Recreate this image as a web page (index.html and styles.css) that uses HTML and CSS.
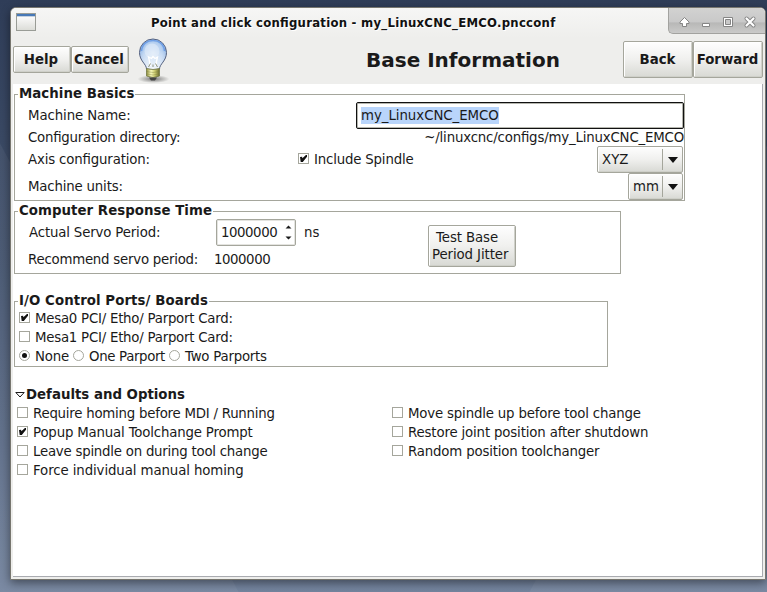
FILE: index.html
```html
<!DOCTYPE html>
<html lang="en">
<head>
<meta charset="utf-8">
<title>Point and click configuration</title>
<link rel="stylesheet" href="styles.css">
</head>
<body>
<div class="window">
  <header class="titlebar">
    <span class="app-icon"></span>
    <span class="caption">Point and click configuration - my_LinuxCNC_EMCO.pncconf</span>
    <span class="controls">
      <svg width="97" height="26" viewBox="0 0 97 26" stroke-linejoin="round">
        <path d="M15.500 9.500 20 14V15.500H17.500V18.500H13.500V15.500H11V14Z" fill="#fff" stroke="#858585"/>
        <rect x="33.500" y="15.500" width="7" height="3" fill="#fff" stroke="#858585"/>
        <rect x="54.500" y="9.500" width="9" height="9" fill="#fff" stroke="#858585"/>
        <rect x="56.500" y="11.500" width="5" height="5" fill="#c8c8c8" stroke="#858585"/>
        <path d="M77.500 10.500 84.500 17.500M84.500 10.500 77.500 17.500" stroke="#858585" stroke-width="4" stroke-linecap="round"/>
        <path d="M77.500 10.500 84.500 17.500M84.500 10.500 77.500 17.500" stroke="#fff" stroke-width="2.2" stroke-linecap="round"/>
      </svg>
    </span>
  </header>
  <div class="toolbar">
    <button class="btn small">Help</button>
    <button class="btn small">Cancel</button>
    <svg class="bulb" width="34" height="46" viewBox="0 0 34 46">
      <defs>
        <radialGradient id="glass" cx=".5" cy=".45" r=".62"><stop offset="0" stop-color="#dce9f8"/><stop offset=".55" stop-color="#b6d0f0"/><stop offset="1" stop-color="#6d9cdc"/></radialGradient>
        <linearGradient id="glow" x1="0" y1="0" x2="0" y2="1"><stop offset=".35" stop-color="#fff" stop-opacity="0"/><stop offset="1" stop-color="#fff" stop-opacity=".95"/></linearGradient>
        <linearGradient id="brass"><stop offset="0" stop-color="#8d8d3c"/><stop offset=".35" stop-color="#fafabc"/><stop offset=".65" stop-color="#c9c96c"/><stop offset="1" stop-color="#66662d"/></linearGradient>
        <radialGradient id="shade"><stop offset="0" stop-color="#000" stop-opacity=".5"/><stop offset="1" stop-color="#000" stop-opacity="0"/></radialGradient>
      </defs>
      <ellipse cx="17.500" cy="41" rx="16" ry="4" fill="url(#shade)"/>
      <path d="M10.500 31C10.500 26 3.500 23 3.500 14.500A13.500 13.500 0 0 1 30.500 14.500C30.500 23 23.500 26 23.500 31Q17 33 10.500 31Z" fill="url(#glass)"/>
      <path d="M10.500 31C10.500 26 3.500 23 3.500 14.500A13.500 13.500 0 0 1 30.500 14.500C30.500 23 23.500 26 23.500 31Q17 33 10.500 31Z" fill="url(#glow)" stroke="#55617e"/>
      <path d="M5.500 13C6 6 11 2.500 17 2.500S28 6 28.500 13" fill="none" stroke="#6f9fe5" stroke-width="1.500"/>
      <circle cx="16" cy="13" r="7.500" fill="#e5effa" opacity=".55"/>
      <path d="M14.500 28 12.500 19 15.500 20.500 17 18.500 19 20.500 21.500 19 19.500 28" fill="none" stroke="#fff" stroke-width="1.300"/>
      <path d="M12.500 29 14.500 25.500M21.500 29 19.500 25.500M17 29V26.500" stroke="#8e937e" fill="none"/>
      <path d="M10.500 30.500Q17 32.500 23.500 30.500V38Q17 41 10.500 38Z" fill="url(#brass)" stroke="#747a45" stroke-width=".8"/>
      <path d="M10.500 33.500Q17 35.500 23.500 33.500M10.500 36Q17 38 23.500 36" stroke="#77783c" fill="none" stroke-width=".6" opacity=".6"/>
      <path d="M13 39.500H21L19 42.500H15Z" fill="#444"/>
    </svg>
    <h1>Base Information</h1>
    <button class="btn big">Back</button>
    <button class="btn big">Forward</button>
  </div>
  <main>
    <section class="frame basics">
      <h2>Machine Basics</h2>
      <div class="row"><label class="snug-1">Machine Name:</label><div class="entry"><span>my_LinuxCNC_EMCO</span></div></div>
      <div class="row dir"><label class="snug-4">Configuration directory:</label><span class="snug-3">~/linuxcnc/configs/my_LinuxCNC_EMCO</span></div>
      <div class="row"><label class="axis snug-2">Axis configuration:</label>
        <span class="check on snug-3"><i></i>Include Spindle</span>
        <div class="combo xyz"><span>XYZ</span><b></b></div></div>
      <div class="row"><label class="snug-3">Machine units:</label><div class="combo mm"><span>mm</span><b></b></div></div>
    </section>
    <section class="frame response">
      <h2>Computer Response Time</h2>
      <div class="periods">
        <label class="actual snug-2">Actual Servo Period:</label>
        <div class="spin-cell"><div class="spin"><span class="digits">1000000</span>
          <svg width="7" height="15" viewBox="0 0 7 15"><path d="M.5 3.500 3.500 .5 6.500 3.500ZM.5 11.500 3.500 14.500 6.500 11.500Z" fill="#1a1a1a"/></svg></div><span>ns</span></div>
        <label class="snug-4">Recommend servo period:</label>
        <span class="digits">1000000</span>
      </div>
      <button class="btn jitter"><span>Test Base</span><span class="snug-1">Period Jitter</span></button>
    </section>
    <section class="frame ports">
      <h2>I/O Control Ports/ Boards</h2>
      <div class="line"><span class="check on snug-4"><i></i>Mesa0 PCI/ Etho/ Parport Card:</span></div>
      <div class="line"><span class="check snug-4"><i></i>Mesa1 PCI/ Etho/ Parport Card:</span></div>
      <div class="line"><span class="radio on snug-3"><i></i>None</span><span class="radio snug-5"><i></i>One Parport</span><span class="radio snug-4"><i></i>Two Parports</span></div>
    </section>
    <section class="options">
      <h3><svg width="10" height="8" viewBox="0 0 10 8"><path d="M.8 1.500H9.200L5 6Z" fill="#fff" stroke="#1a1a1a"/></svg>Defaults and Options</h3>
      <div class="cols">
        <div>
          <div class="line"><span class="check snug-4"><i></i>Require homing before MDI / Running</span></div>
          <div class="line"><span class="check on snug-3"><i></i>Popup Manual Toolchange Prompt</span></div>
          <div class="line"><span class="check snug-4"><i></i>Leave spindle on during tool change</span></div>
          <div class="line"><span class="check snug-1"><i></i>Force individual manual homing</span></div>
        </div>
        <div>
          <div class="line"><span class="check snug-3"><i></i>Move spindle up before tool change</span></div>
          <div class="line"><span class="check snug-2"><i></i>Restore joint position after shutdown</span></div>
          <div class="line"><span class="check snug-3"><i></i>Random position toolchanger</span></div>
        </div>
      </div>
    </section>
  </main>
</div>
</body>
</html>
```
FILE: styles.css
```css
* { box-sizing: border-box; }
body {
  margin: 0; width: 767px; height: 592px; overflow: hidden;
  padding: 7px 0 0 10px;
  background:
    linear-gradient(62deg, rgba(255,255,255,.05) 0 22%, transparent 22.1%),
    linear-gradient(118deg, transparent 0 78%, rgba(255,255,255,.05) 78.1%),
    linear-gradient(#2f3d58, #44546f 45%, #5c6c87 75%, #74849e);
  font: 13.33px/17px "DejaVu Sans", sans-serif; color: #1a1a1a;
  font-feature-settings: "liga" 1;
}
h1, h2, h3 { margin: 0; }
.snug-1 { letter-spacing: -.1px; }
.snug-2 { letter-spacing: -.16px; }
.snug-3 { letter-spacing: -.18px; }
.snug-4 { letter-spacing: -.235px; }
.snug-5 { letter-spacing: -.35px; }
.digits { letter-spacing: -.45px; }
.window {
  width: 756px; height: 573px; display: flex; flex-direction: column;
  border: 1px solid #77766f; border-radius: 6px 6px 1px 1px;
  background: #eeeeec; overflow: hidden;
  box-shadow: 0 3px 10px rgba(0,0,0,.45);
}
.titlebar { height: 30px; flex: none; display: flex; background: linear-gradient(#f6f6f5, #eeeeec); }
.app-icon {
  width: 20px; height: 18px; margin: 5px 0 0 5px; border: 1px solid #999c96;
  background: linear-gradient(#4779b7 0 2px, #c5d1df 2px 3px, #fafafa 3px, #dcddd8);
}
.caption {
  margin-left: 115px; width: 405px; white-space: nowrap; line-height: 30px;
  font-size: 11.7px; letter-spacing: .255px; font-weight: bold; color: #111; text-shadow: 1px 1px #fff;
}
.controls {
  margin-left: auto; width: 97px; height: 26px; border-radius: 0 0 0 5px;
  background: linear-gradient(#d2d2d1, #c9c9c9 55%, #b8b8b7 60%, #cacac9);
  border: solid #a2a29f; border-width: 0 0 1px 1px;
}
.controls svg { display: block; }
.toolbar { height: 46px; flex: none; display: flex; align-items: center; padding: 0 2px; margin-top: -2px; }
.btn {
  font: inherit; color: inherit; padding: 0; margin: 0; border: 1px solid #a5a69c; border-radius: 2px;
  background: linear-gradient(#fefefe, #f0f0ee 50%, #d8d9d4);
  box-shadow: inset 1px 1px #fff, inset -1px -1px #cfd0c9;
}
.small, .big { font-size: 13.33px; font-weight: bold; }
.small { width: 58px; height: 27px; margin-top: 1px; padding: 0 2px 1px 0; }
.bulb { margin: 3px 0 0 7px; }
.toolbar h1 { margin-left: 196px; width: 257px; font-size: 20px; line-height: 24px; white-space: nowrap; margin-top: 1px; }
.big { width: 70px; height: 37px; padding-right: 1px; }
main {
  flex: 1; margin: 2px; background: #fff;
  border: solid #a9abb0; border-width: 0 1px 1px 0; padding: 10px 0 0 1px;
}
.frame { position: relative; border: 1px solid #a5a69c; }
.frame h2 {
  position: absolute; left: 3px; top: -10px; padding: 0 1px; background: #fff;
  font-size: 13.33px; line-height: 17px; white-space: nowrap; letter-spacing: .04px;
}
.basics { width: 671px; height: 107px; padding: 7px 0 0 13px; }
.row { height: 27px; display: flex; align-items: center; justify-content: space-between; white-space: nowrap; }
.row.dir { height: 17px; }
.entry {
  width: 328px; height: 27px; border: 1px solid #111; border-radius: 2px;
  box-shadow: inset 0 0 0 1px #b5b6ae; padding: 4px 4px;
}
.entry span { display: inline-block; height: 17px; background: #b9d5fb; letter-spacing: -.04px; }
.axis { width: 270px; }
.check, .radio { display: flex; align-items: center; white-space: nowrap; }
.check i { width: 11px; height: 11px; border: 1px solid #a5a69c; background: #fff; margin-right: 5px; flex: none; position: relative; top: -1px; }
.check.on i::after {
  content: ""; position: absolute; left: 1px; top: 1px; width: 7px; height: 7px; background: #111;
  clip-path: polygon(0 30%, 30% 25%, 34% 48%, 85% 0, 100% 0, 100% 25%, 40% 100%, 10% 100%);
}
.row .check { margin-right: auto; }
.combo {
  height: 27px; display: flex; align-items: center; border: 1px solid #a5a69c; border-radius: 2px;
  background: linear-gradient(#fefefe, #f0f0ee 50%, #d8d9d4); margin-right: 1px;
  box-shadow: inset 1px 1px #fff, inset 0 -1px #cfd0c9;
}
.combo span { flex: 1; padding-left: 4px; }
.combo b { width: 20px; height: 21px; border-left: 1px solid #a5a69c; display: flex; align-items: center; justify-content: center; }
.combo b::after { content: ""; border: solid transparent; border-width: 6px 5.500px 0; border-top-color: #111; }
.xyz { width: 86px; }
.mm { width: 55px; }
.response { width: 607px; height: 63px; margin-top: 10px; padding: 7px 0 0 13px; display: flex; }
.periods { display: grid; grid-template-columns: 186px 200px; grid-template-rows: 27px 27px; align-items: center; white-space: nowrap; }
.actual { padding-left: 1px; }
.spin-cell { display: flex; align-items: center; gap: 8px; padding-left: 2px; }
.spin {
  width: 80px; height: 27px; border: 1px solid #a5a69c; border-radius: 2px; display: flex; align-items: center;
  justify-content: space-between; padding: 0 3px 0 4px; box-shadow: inset 0 0 0 1px #e4e4e0;
}
.jitter { width: 88px; height: 42px; margin: 6px 0 0 14px; text-align: left; padding-left: 3px; }
.jitter span { display: block; line-height: 17px; white-space: nowrap; }
.jitter span:first-child { padding-left: 4px; letter-spacing: -.1px; }
.ports { width: 594px; height: 66px; margin-top: 27px; padding: 7px 0 0 4px; }
.ports h2 { letter-spacing: .07px; }
.line { height: 19px; display: flex; align-items: center; }
.radio i { width: 11px; height: 11px; border: 1px solid #a5a69c; border-radius: 50%; margin-right: 5px; position: relative; top: -1px; }
.radio { margin-right: 4px; }
.radio.on i::after { content: ""; position: absolute; left: 2px; top: 2px; width: 5px; height: 5px; border-radius: 50%; background: #111; }
.options { margin-top: 18px; }
.options h3 { height: 19px; line-height: 19px; font-size: 13.33px; display: flex; align-items: center; gap: 1px; padding-left: 1px; }
.cols { display: grid; grid-template-columns: 375px 300px; padding-left: 3px; }
```
